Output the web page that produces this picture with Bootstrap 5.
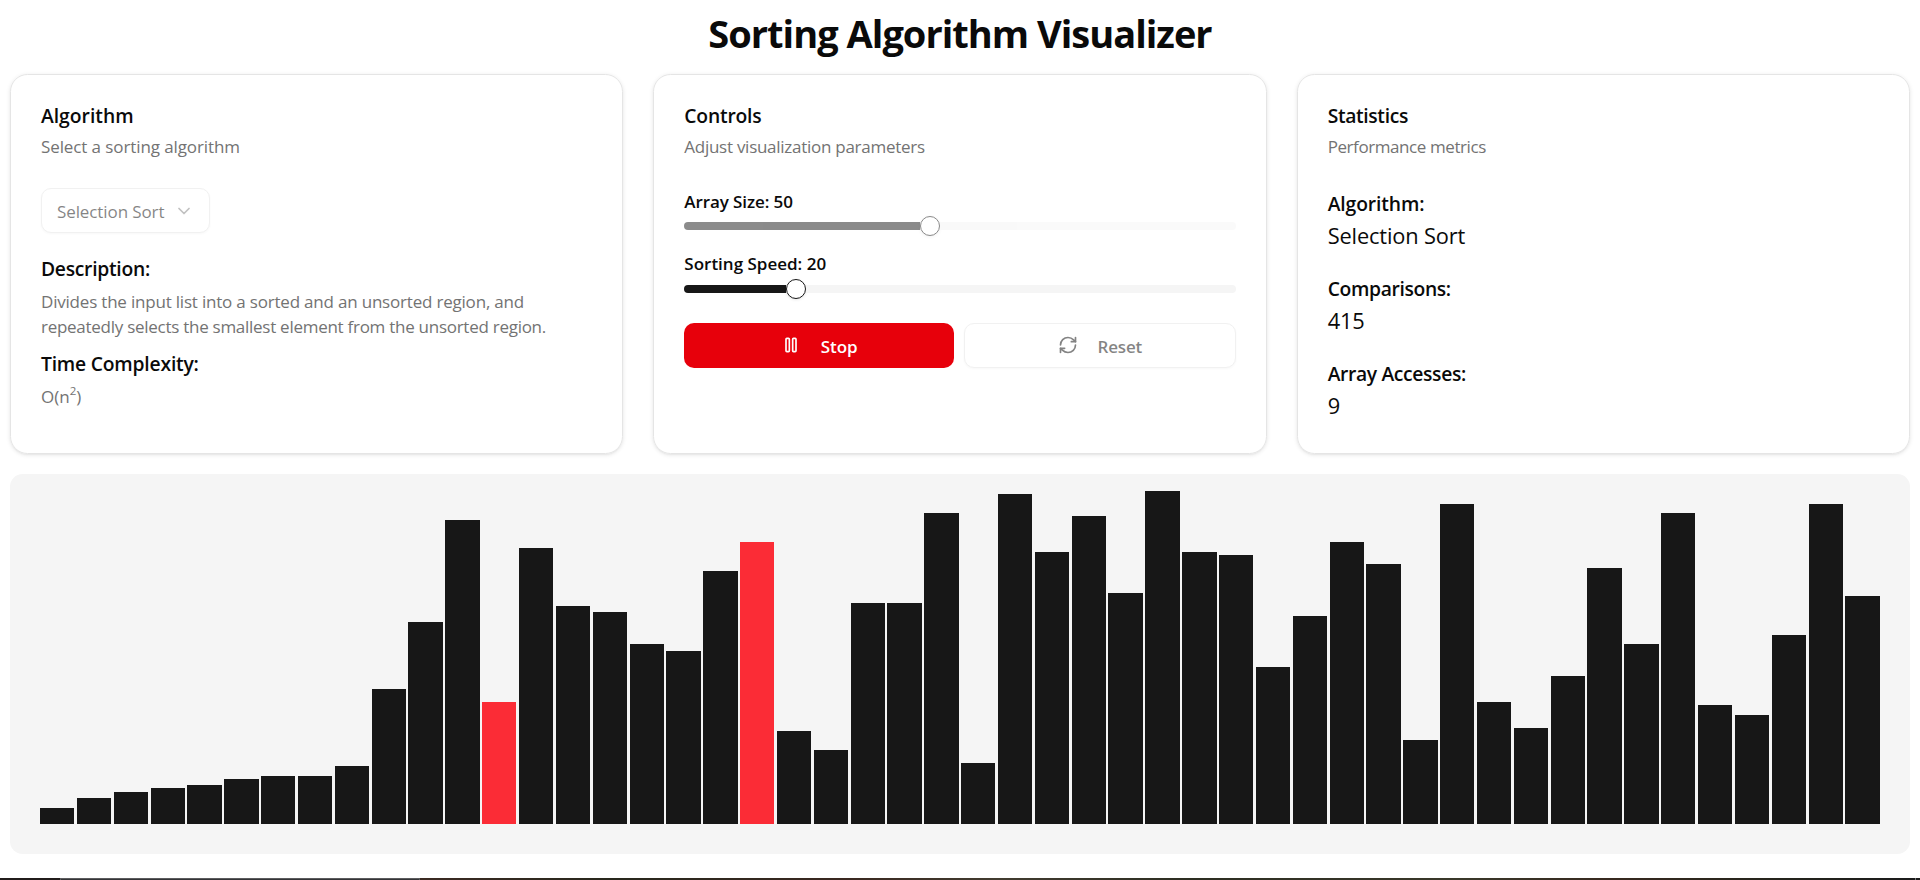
<!DOCTYPE html>
<html lang="en">
<head>
<meta charset="utf-8">
<meta name="viewport" content="width=device-width, initial-scale=1">
<title>Sorting Algorithm Visualizer</title>
<link href="https://cdn.jsdelivr.net/npm/bootstrap@5.3.0/dist/css/bootstrap.min.css" rel="stylesheet">
<style>
body { font-family: "Open Sans", "Noto Sans", sans-serif; color: #0a0a0a; font-size: 17px; height: 880px; overflow: hidden; }
.page-title { font-size: 38px; line-height: 50px; font-weight: 700; letter-spacing: -.99px; margin: 8px 0 16px; }
.panels { display: grid; grid-template-columns: repeat(3, 1fr); grid-template-rows: 380px; gap: 30px; }
.panel { border: 1px solid #e5e5e5; border-radius: 17.5px; padding: 30px; box-shadow: 0 1px 4px rgba(0,0,0,.1), 0 1px 2px -1px rgba(0,0,0,.1); }
.heading { font-size: 19.3px; font-weight: 600; line-height: 30px; margin: 0; }
.heading-top { line-height: 20px; margin: 1px 0 8px; }
.muted { color: #737373; line-height: 25px; margin: 0; }
.muted sup { font-size: 11.5px; top: -8px; line-height: 0; }
.picker { height: 45px; border: 1px solid #e5e5e5; border-radius: 10px; padding: 0 15px; gap: 10px; margin: 29px 0 21px; opacity: .5; background: #fff; box-shadow: 0 1px 2px rgba(0,0,0,.05); color: #0a0a0a; width: 169px; white-space: nowrap; }
.picker span { position: relative; top: 1px; letter-spacing: -.1px; }
.icon { width: 20px; height: 20px; flex: none; fill: none; stroke: currentColor; stroke-width: 2; stroke-linecap: round; stroke-linejoin: round; }
.slider-label { font-weight: 600; line-height: 18px; }
.slider { display: flex; align-items: center; height: 20px; margin-top: 6px; }
.slider .rail, .slider .fill { height: 7.5px; }
.slider .fill { background: #171717; border-radius: 8px 0 0 8px; }
.slider .knob { width: 20px; height: 20px; border: 1px solid #171717; border-radius: 50%; background: #fff; flex: none; box-shadow: 0 1px 3px rgba(0,0,0,.1); }
.slider .rail { flex: 1; background: #f5f5f5; border-radius: 0 8px 8px 0; }
.is-off { opacity: .5; }
.action { height: 45px; border-radius: 10px; font-size: 17px; font-weight: 600; gap: 20px; padding: 0; flex: 1 1 0; }
.action .icon { position: relative; top: -.5px; }
.action span { position: relative; top: 1px; }
.action-stop { background: #e7000b; color: #fff; border: 0; }
.action-reset { border: 1px solid #e5e5e5; color: #0a0a0a; opacity: .5; box-shadow: 0 1px 2px rgba(0,0,0,.05); background: #fff; }
.stat { margin-bottom: 22px; }
.stat-value { font-size: 21.8px; line-height: 33px; letter-spacing: -.15px; }
.chart { height: 380px; margin-top: 20px; border-radius: 12.5px; background: #f5f5f5; padding: 0 30px 30px; gap: 2.5px; }
.bar { flex: 1 1 0; background: #171717; }
.bar.active { background: #fb2c36; }
.taskbar { height: 2px; margin-top: 24px; background: linear-gradient(90deg, #2b1f18, #25251a 10%, #3b2a22 22%, #28281d 32%, #3a2820 44%, #423c30 52%, #2d2e22 62%, #3a382a 76%, #37291f 84%, #24241c 93%, #1b1b1b); }
.taskbar .dark { width: 60px; background: #211c1b; }
.taskbar .search { width: 360px; background: #353537; border: 1px solid #5c5c5e; border-bottom: 0; }
.taskbar .peek { width: 1px; background: #777; margin-right: 4px; }
.t1 { letter-spacing: -.1px; } .t2 { letter-spacing: -.2px; } .t3 { letter-spacing: -.35px; } .t4 { letter-spacing: -.15px; } .t5 { letter-spacing: -.27px; } .t6 { letter-spacing: -.42px; }
</style>
</head>
<body class="bg-white">
<main style="padding:0 10px" class="overflow-hidden">
  <h1 class="page-title text-center">Sorting Algorithm Visualizer</h1>
  <div class="panels">
    <section class="panel">
      <h2 class="heading heading-top">Algorithm</h2>
      <p class="muted t1">Select a sorting algorithm</p>
      <button class="picker d-flex align-items-center" disabled>
        <span>Selection Sort</span>
        <svg class="icon is-off" viewBox="0 0 24 24"><path d="m6 9 6 6 6-6"/></svg>
      </button>
      <h3 class="heading t5">Description:</h3>
      <p class="muted t2" style="margin:5px 0 10px">Divides the input list into a sorted and an unsorted region, and<br><span class="t5">repeatedly selects the smallest element from the unsorted region.</span></p>
      <h3 class="heading t2">Time Complexity:</h3>
      <p class="muted" style="margin-top:5px">O(n<sup>2</sup>)</p>
    </section>
    <section class="panel">
      <h2 class="heading heading-top t2">Controls</h2>
      <p class="muted t5">Adjust visualization parameters</p>
      <div class="slider-label t1" style="margin:34px 0 -1px">Array Size: 50</div>
      <div class="slider is-off">
        <div class="fill" style="width:236px"></div><div class="knob"></div><div class="rail"></div>
      </div>
      <div class="slider-label" style="margin-top:19px">Sorting Speed: 20</div>
      <div class="slider">
        <div class="fill" style="width:102px"></div><div class="knob"></div><div class="rail"></div>
      </div>
      <div class="d-flex" style="gap:10px;margin-top:24px">
        <button class="btn action action-stop d-flex align-items-center justify-content-center">
          <svg class="icon" viewBox="0 0 24 24"><rect x="14" y="4" width="4" height="16" rx="1"/><rect x="6" y="4" width="4" height="16" rx="1"/></svg>
          <span>Stop</span>
        </button>
        <button class="btn action action-reset d-flex align-items-center justify-content-center">
          <svg class="icon" viewBox="0 0 24 24"><path d="M3 12a9 9 0 0 1 9-9 9.75 9.75 0 0 1 6.74 2.74L21 8"/><path d="M21 3v5h-5"/><path d="M21 12a9 9 0 0 1-9 9 9.75 9.75 0 0 1-6.74-2.74L3 16"/><path d="M8 16H3v5"/></svg>
          <span class="t2">Reset</span>
        </button>
      </div>
    </section>
    <section class="panel">
      <h2 class="heading heading-top t3">Statistics</h2>
      <p class="muted t6" style="margin-bottom:30px">Performance metrics</p>
      <div class="stat"><h3 class="heading t1">Algorithm:</h3><div class="stat-value">Selection Sort</div></div>
      <div class="stat"><h3 class="heading t3">Comparisons:</h3><div class="stat-value t2">415</div></div>
      <div class="stat"><h3 class="heading t3">Array Accesses:</h3><div class="stat-value">9</div></div>
    </section>
  </div>
  <div class="chart d-flex align-items-end" id="chart"></div>
</main>
<div class="taskbar d-flex"><div class="dark"></div><div class="search"></div><div class="peek ms-auto"></div></div>
<script src="https://cdn.jsdelivr.net/npm/bootstrap@5.3.0/dist/js/bootstrap.bundle.min.js"></script>
<script>
  const heights = [16,26,32,36,39,45,48,48,58,135,202,304,122,276,218,212,180,173,253,282,93,74,221,221,311,61,330,272,308,231,333,272,269,157,208,282,260,84,320,122,96,148,256,180,311,119,109,189,320,228];
  const comparing = [12, 19];
  document.getElementById('chart').innerHTML = heights.map((h, i) =>
    `<div class="bar${comparing.includes(i) ? ' active' : ''}" style="height:${h}px"></div>`).join('');
</script>
</body>
</html>
